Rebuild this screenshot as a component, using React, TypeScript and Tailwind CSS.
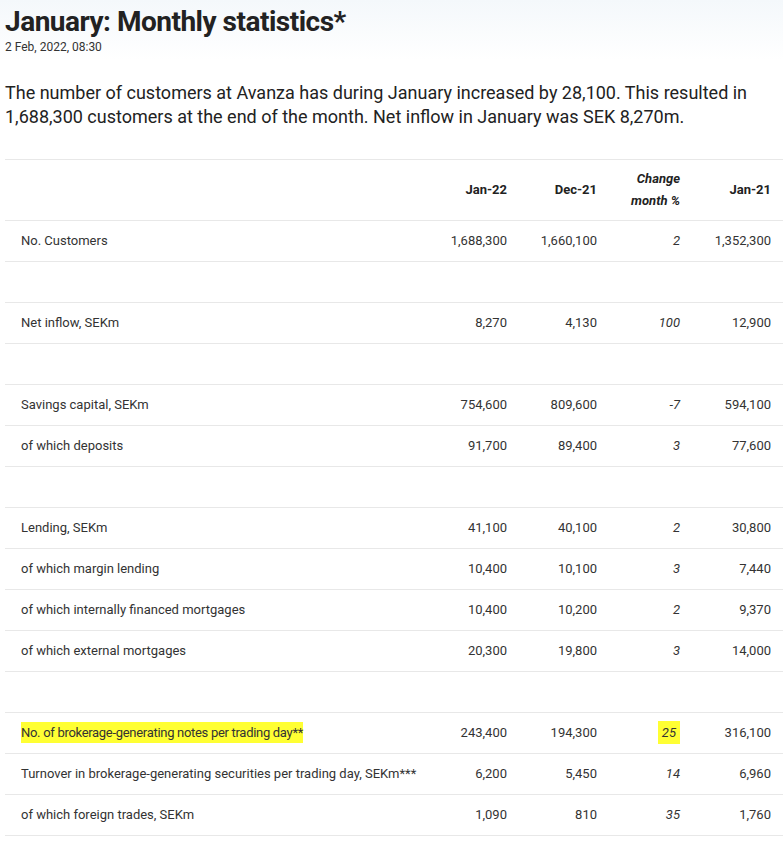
const rows: (string[] | null)[] = [
  ["No. Customers", "1,688,300", "1,660,100", "2", "1,352,300"],
  null,
  ["Net inflow, SEKm", "8,270", "4,130", "100", "12,900"],
  null,
  ["Savings capital, SEKm", "754,600", "809,600", "-7", "594,100"],
  ["of which deposits", "91,700", "89,400", "3", "77,600"],
  null,
  ["Lending, SEKm", "41,100", "40,100", "2", "30,800"],
  ["of which margin lending", "10,400", "10,100", "3", "7,440"],
  ["of which internally financed mortgages", "10,400", "10,200", "2", "9,370"],
  ["of which external mortgages", "20,300", "19,800", "3", "14,000"],
  null,
  ["No. of brokerage-generating notes per trading day**", "243,400", "194,300", "25", "316,100"],
  ["Turnover in brokerage-generating securities per trading day, SEKm***", "6,200", "5,450", "14", "6,960"],
  ["of which foreign trades, SEKm", "1,090", "810", "35", "1,760"],
];

export default function App() {
  return (
    <div className="min-h-[847px] overflow-hidden bg-gradient-to-b from-[#f4f8fb] to-white to-[60px] pl-[5px] font-[family-name:Roboto,sans-serif] text-[#222]">
      <h1 className="pt-[4px] font-[family-name:'DejaVu_Serif',serif] text-[28px] font-bold leading-[36px] tracking-[-0.5px] whitespace-nowrap">
        January: Monthly statistics*
      </h1>
      <div className="text-[12px] leading-[14px] text-[#333]">2 Feb, 2022, 08:30</div>
      <p className="mt-[27px] w-[778px] text-[18px] leading-[24px] text-[#222]">
        The number of customers at Avanza has during January increased by 28,100. This resulted in 1,688,300 customers at the end of the month. Net inflow in January was SEK 8,270m.
      </p>
      <table className="mt-[30px] w-[778px] table-fixed border-collapse text-[13px] text-[#333]">
        <colgroup>
          <col className="w-[424px]" />
          <col className="w-[90px]" />
          <col className="w-[90px]" />
          <col className="w-[83px]" />
          <col className="w-[91px]" />
        </colgroup>
        <thead>
          <tr className="h-[61px] border-y border-[#e8e8e8] font-bold text-[#222]">
            <th />
            <th className="pr-[12px] text-right">Jan-22</th>
            <th className="pr-[12px] text-right">Dec-21</th>
            <th className="pr-[12px] text-right italic leading-[22px]">Change<br />month %</th>
            <th className="pr-[12px] text-right">Jan-21</th>
          </tr>
        </thead>
        <tbody>
          {rows.map((r, i) => {
            const hl = r && r[0].startsWith("No. of brokerage");
            return (
              <tr key={i} className="h-[41px] border-b border-[#e8e8e8]">
                {r ? (
                  <>
                    <td className="whitespace-nowrap pl-[16px]">
                      <span className={hl ? "bg-[#ffff33] py-[3px] tracking-[-0.3px]" : ""}>{r[0]}</span>
                    </td>
                    <td className="pr-[12px] text-right">{r[1]}</td>
                    <td className="pr-[12px] text-right">{r[2]}</td>
                    <td className="pr-[12px] text-right italic">
                      <span className={hl ? "bg-[#ffff33] px-[4px] py-[4px]" : ""}>{r[3]}</span>
                    </td>
                    <td className="pr-[12px] text-right">{r[4]}</td>
                  </>
                ) : (
                  <td colSpan={5} />
                )}
              </tr>
            );
          })}
        </tbody>
      </table>
    </div>
  );
}
